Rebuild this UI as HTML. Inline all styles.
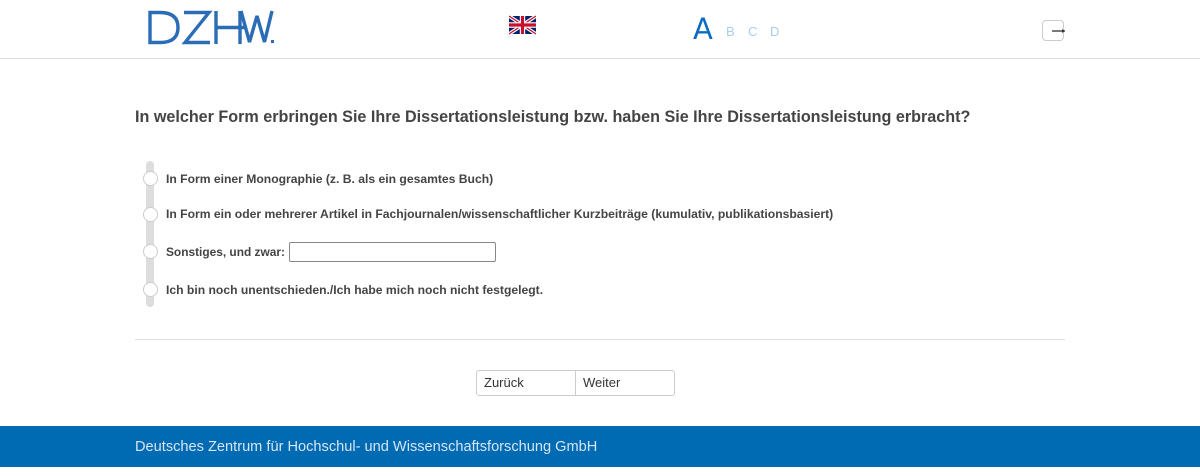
<!DOCTYPE html>
<html><head><meta charset="utf-8"><style>
*{margin:0;padding:0;box-sizing:border-box}
body{width:1200px;height:476px;background:#fff;font-family:"Liberation Sans",sans-serif;position:relative;overflow:hidden;color:#333}
.hdr{position:absolute;left:0;top:0;width:1200px;height:59px;border-bottom:1px solid #ddd}
.logo{position:absolute;left:146px;top:8px}
.flag{position:absolute;left:509px;top:15px;width:27px;height:20px}
.A{position:absolute;left:693px;top:12px;font-size:29px;color:#0a6cc0;font-family:"DejaVu Sans",sans-serif}
.sm{position:absolute;top:24px;font-size:13px;color:#a9cfea}
.exit{position:absolute;left:1042px;top:20px;width:22px;height:21px;border:1px solid #ccc;border-radius:4px}
.q{position:absolute;left:135px;top:108px;font-size:16.15px;font-weight:bold;color:#444}
.bar{position:absolute;left:146px;top:161px;width:8px;height:146px;background:#ddd;border-radius:4px}
.r{position:absolute;left:143px;width:15px;height:15px;border-radius:50%;background:#fff;border:1px solid #ccc}
.o{position:absolute;left:166px;font-size:12.15px;font-weight:bold;color:#444}
.inp{position:absolute;left:289px;top:242px;width:207px;height:20px;border:1px solid #888;border-radius:2px}
.hr{position:absolute;left:135px;top:339px;width:930px;height:1px;background:#ddd}
.btn{position:absolute;top:370px;height:26px;border:1px solid #ccc;font-size:13px;color:#333;padding:4px 7px}
.ftr{position:absolute;left:0;top:426px;width:1200px;height:41px;background:#006ab3;color:#d6e6f4;font-size:14.6px;padding:13px 135px 0}
</style></head><body>
<div class="hdr">
<svg class="logo" width="132" height="40" viewBox="146 8 132 40" fill="none" stroke="#2b6cb6" stroke-width="3.4" stroke-linejoin="bevel">
<path d="M150 12.5H160Q178 12.5 178 27.5Q178 42.5 160 42.5H150Z" stroke-linejoin="miter"/>
<path d="M184 12.5H209L185 42.5H210" stroke-linejoin="miter"/>
<path d="M216 11V44M240 11V44M216 27.5H246"/>
<path d="M241 11L249.5 42L257 16L264.5 42L272 11"/>
<rect x="271" y="40" width="3" height="3" fill="#2b6cb6" stroke="none"/>
</svg>
<svg class="flag" viewBox="0 0 60 40"><rect width="60" height="40" fill="#012169"/><path d="M0,0L60,40M60,0L0,40" stroke="#fff" stroke-width="8"/><path d="M0,0L60,40M60,0L0,40" stroke="#c8102e" stroke-width="3"/><path d="M30,0V40M0,20H60" stroke="#fff" stroke-width="12"/><path d="M30,0V40M0,20H60" stroke="#c8102e" stroke-width="7"/></svg>
<div class="A">A</div>
<div class="sm" style="left:726px">B</div><div class="sm" style="left:748px">C</div><div class="sm" style="left:770px">D</div>
<div class="exit"><svg width="22" height="21" style="position:absolute;left:0;top:0"><path d="M9 10H22" stroke="#333" stroke-width="1.3"/><path d="M19 8L22 10L19 12Z" fill="#333"/></svg></div>
</div>
<div class="q">In welcher Form erbringen Sie Ihre Dissertationsleistung bzw. haben Sie Ihre Dissertationsleistung erbracht?</div>
<div class="bar"></div>
<div class="r" style="top:171px"></div><div class="o" style="top:172px">In Form einer Monographie (z. B. als ein gesamtes Buch)</div>
<div class="r" style="top:207px"></div><div class="o" style="top:207px">In Form ein oder mehrerer Artikel in Fachjournalen/wissenschaftlicher Kurzbeiträge (kumulativ, publikationsbasiert)</div>
<div class="r" style="top:244px"></div><div class="o" style="top:245px;font-size:11.9px">Sonstiges, und zwar:</div><div class="inp"></div>
<div class="r" style="top:282px"></div><div class="o" style="top:283px">Ich bin noch unentschieden./Ich habe mich noch nicht festgelegt.</div>
<div class="hr"></div>
<div class="btn" style="left:476px;width:100px;border-radius:3px 0 0 3px">Zurück</div>
<div class="btn" style="left:575px;width:100px;border-radius:0 3px 3px 0">Weiter</div>
<div class="ftr">Deutsches Zentrum für Hochschul- und Wissenschaftsforschung GmbH</div>
</body></html>
